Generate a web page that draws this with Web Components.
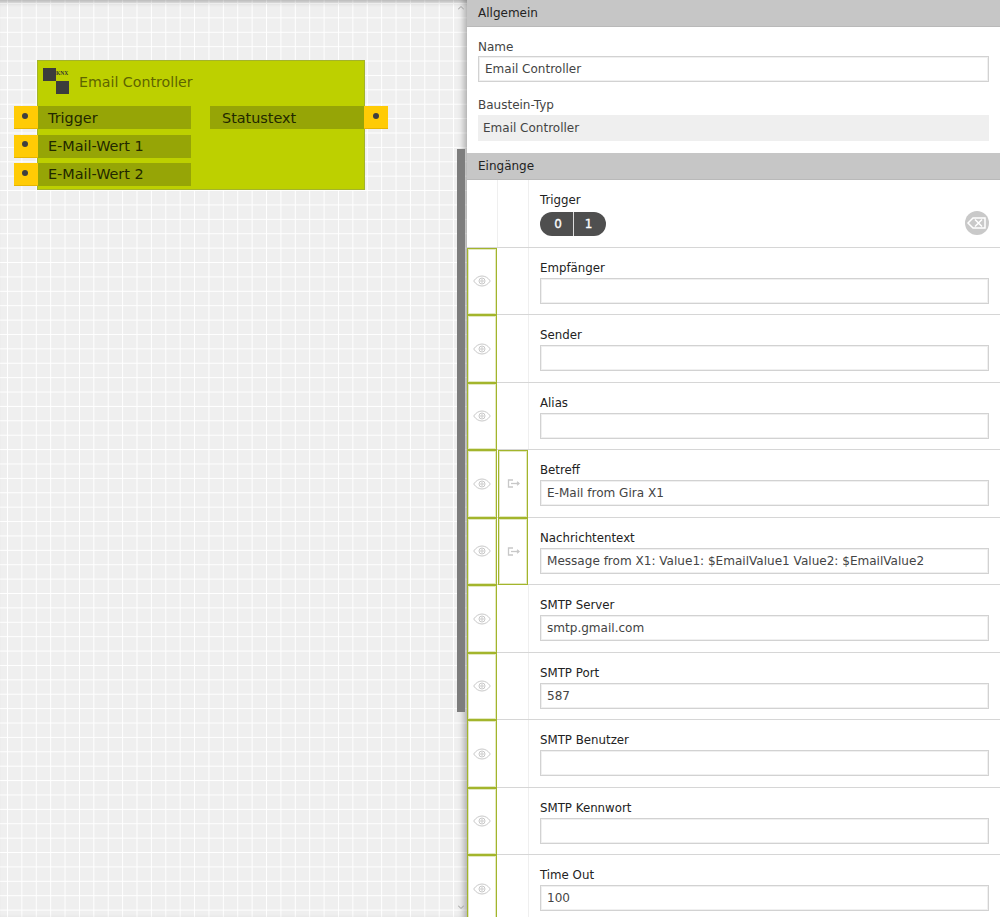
<!DOCTYPE html>
<html>
<head>
<meta charset="utf-8">
<title>Email Controller</title>
<style>
html, body { margin: 0; height: 100%; overflow: hidden; }
body { font-family: "DejaVu Sans", sans-serif; }
logic-editor { height: 917px; }
</style>
</head>
<body>

<template id="editor-tpl">
  <style>
    :host { display: grid; grid-template-columns: 467px 533px; width: 1000px; overflow: hidden; }
  </style>
  <slot name="canvas"></slot>
  <slot name="panel"></slot>
</template>

<template id="canvas-tpl">
  <style>
    :host {
      display: block; position: relative; height: 917px; overflow: hidden;
      padding: 60px 0 0 14px; box-sizing: border-box;
      background-color: #efefef;
      background-image:
        linear-gradient(to right, #fff 1.4px, transparent 1.4px),
        linear-gradient(to bottom, #fff 1.4px, transparent 1.4px);
      background-size: 14.4px 14.4px;
      background-position: 7px 3px;
      box-shadow: inset -7px 0 6px -4px rgba(0,0,0,.28), inset 0 6px 5px -4px rgba(0,0,0,.25);
    }
    .thumb { position: absolute; left: 457px; top: 149px; width: 8px; height: 563px; background: #7d7d7d; }
    .arrow { position: absolute; left: 458px; width: 6px; height: 6px; }
    .up { top: 5px; }
    .down { top: 904px; }
  </style>
  <slot></slot>
  <div class="thumb"></div>
  <svg class="arrow up" viewBox="0 0 6 6"><path d="M0 4.5 3 1.5 6 4.5" fill="none" stroke="#999"/></svg>
  <svg class="arrow down" viewBox="0 0 6 6"><path d="M0 1.5 3 4.5 6 1.5" fill="none" stroke="#999"/></svg>
</template>

<template id="block-tpl">
  <style>
    :host { display: block; width: 374px; }
    .box {
      margin: 0 23px; background: #bdd000; border: 1px solid #a3b32c; box-sizing: border-box;
      height: 130px; padding-top: 7px;
    }
    .head { display: flex; align-items: center; gap: 10px; padding-left: 4px; height: 28px; color: #5d6400; font-size: 14.2px; }
    .head svg { width: 27px; height: 27px; flex: none; align-self: flex-start; }
    .ports { display: grid; grid-template-columns: 177px 178px; column-gap: 19px; margin: 10px -24px 0; }
    .col { display: flex; flex-direction: column; gap: 5.700px; }
  </style>
  <div class="box">
    <div class="head">
      <svg viewBox="0 0 27 27">
        <rect x="1" y="0" width="13" height="13" fill="#3c3c3c"/>
        <rect x="14" y="13" width="13" height="13" fill="#3c3c3c"/>
        <text x="14" y="6.500" font-size="5.500" font-family="Liberation Serif, serif" font-weight="bold" fill="#333">KNX</text>
      </svg>
      <span><slot name="title"></slot></span>
    </div>
    <div class="ports">
      <div class="col"><slot name="in"></slot></div>
      <div class="col"><slot name="out"></slot></div>
    </div>
  </div>
</template>

<template id="port-tpl">
  <style>
    :host { display: flex; height: 23px; font-size: 14.400px; color: #222800; }
    .pin { width: 24px; flex: none; background: #ffcb05; border-bottom: 1px solid #e6b400; box-sizing: border-box; display: flex; align-items: center; justify-content: center; }
    .pin i { width: 6px; height: 6px; border-radius: 50%; background: #3f3f3f; margin: -3px 2px 0 0; }
    .lab { flex: 1; background: #96a506; padding-left: 10px; line-height: 23px; }
    :host([side="out"]) { flex-direction: row-reverse; }
    :host([side="out"]) .lab { padding-left: 12px; }
    :host([side="out"]) .pin i { margin-right: 0; }
    :host([first]) .lab { line-height: 24px; }
  </style>
  <div class="pin"><i></i></div>
  <div class="lab"><slot></slot></div>
</template>

<template id="panel-tpl">
  <style>
    :host { display: block; height: 917px; overflow: hidden; background: #fff; color: #333; font-size: 12px; }
  </style>
  <slot></slot>
</template>

<template id="section-tpl">
  <style>
    :host { display: block; }
    .title {
      height: 27px; line-height: 26px; box-sizing: border-box; padding-left: 11px;
      background: #c6c6c6; border-bottom: 1px solid #b9b9b9; color: #222; font-size: 12px;
    }
  </style>
  <div class="title"><slot name="title"></slot></div>
  <slot></slot>
</template>

<template id="general-tpl">
  <style>
    :host { display: block; padding: 13px 11px 0 11px; height: 126px; box-sizing: border-box; color: #444; font-size: 12px; }
    label { display: block; line-height: 15px; margin-bottom: 1px; }
    .val { height: 26px; line-height: 25px; border: 1px solid #d2d2d2; box-shadow: inset 0 0 0 1px #f0f0f0; box-sizing: border-box; padding-left: 6px; margin-bottom: 16px; }
    .ro { height: 26px; line-height: 26px; background: #efefef; padding-left: 5px; margin-top: 2px; }
  </style>
  <label>Name</label>
  <div class="val">Email Controller</div>
  <label>Baustein-Typ</label>
  <div class="ro">Email Controller</div>
</template>

<template id="row-tpl">
  <style>
    :host {
      display: grid; grid-template-columns: 31px 31px 1fr; height: 67.500px; box-sizing: border-box;
      border-bottom: 1px solid #d6d6d6;
    }
    .cell { border-right: 1px solid #efefef; display: flex; align-items: center; justify-content: center; box-sizing: border-box; }
    .cell.on { border: 1px solid #a3b52c; box-shadow: inset 0 0 0 1px rgba(163,181,44,.3); margin-right: 1px; margin-bottom: -1px; }
    .cell svg { display: none; }
    .cell.on svg { display: block; }
    .body { padding: 13px 11px 0 11px; position: relative; }
    label { display: block; color: #222; font-size: 11.800px; line-height: 15px; margin-bottom: 2px; }
    .val { height: 26px; line-height: 24px; border: 1px solid #d2d2d2; box-shadow: inset 0 0 0 1px #f0f0f0; box-sizing: border-box; padding-left: 6px; color: #444; white-space: nowrap; overflow: hidden; font-size: 12.060px; }
    .pill { display: inline-flex; height: 24px; margin-top: 2px; border-radius: 12px; overflow: hidden; background: #4f4f4f; color: #fff; line-height: 24px; font-size: 12px; -webkit-text-stroke: .3px #fff; }
    .pill b { width: 33px; box-sizing: border-box; text-align: center; font-weight: normal; padding-left: 3px; }
    .pill b + b { border-left: 1px solid #ddd; padding: 0 3px 0 0; }
    .clear { position: absolute; right: 11px; top: 31px; width: 24px; height: 24px; }
  </style>
  <div class="cell" id="eye">
    <svg width="18" height="12" viewBox="0 0 18 12" fill="none" stroke="#c8c8c8">
      <path d="M.7 6C3 2.600 6 1 9 1s6 1.600 8.300 5C15 9.400 12 11 9 11S3 9.400.7 6z"/>
      <circle cx="9" cy="6" r="3"/><circle cx="9" cy="6" r="1.200"/>
    </svg>
  </div>
  <div class="cell" id="link">
    <svg width="13" height="9" viewBox="0 0 13 9" fill="none" stroke="#c8c8c8" stroke-width="1.300">
      <path d="M6 1H1.500v7H6"/><path d="M4 4.500h8"/><path d="M10 2.800 12 4.500 10 6.200"/>
    </svg>
  </div>
  <div class="body">
    <label id="label"></label>
    <div id="content"></div>
  </div>
</template>

<logic-editor>
  <logic-canvas slot="canvas">
    <logic-block>
      <span slot="title">Email Controller</span>
      <logic-port slot="in" first>Trigger</logic-port>
      <logic-port slot="in">E-Mail-Wert 1</logic-port>
      <logic-port slot="in">E-Mail-Wert 2</logic-port>
      <logic-port slot="out" side="out" first>Statustext</logic-port>
    </logic-block>
  </logic-canvas>
  <prop-panel slot="panel">
    <prop-section>
      <span slot="title">Allgemein</span>
      <prop-general></prop-general>
    </prop-section>
    <prop-section>
      <span slot="title">Eingänge</span>
      <prop-row label="Trigger" toggle></prop-row>
      <prop-row label="Empfänger" eye></prop-row>
      <prop-row label="Sender" eye></prop-row>
      <prop-row label="Alias" eye></prop-row>
      <prop-row label="Betreff" eye link value="E-Mail from Gira X1"></prop-row>
      <prop-row label="Nachrichtentext" eye link value="Message from X1: Value1: $EmailValue1 Value2: $EmailValue2"></prop-row>
      <prop-row label="SMTP Server" eye value="smtp.gmail.com"></prop-row>
      <prop-row label="SMTP Port" eye value="587"></prop-row>
      <prop-row label="SMTP Benutzer" eye></prop-row>
      <prop-row label="SMTP Kennwort" eye></prop-row>
      <prop-row label="Time Out" eye value="100"></prop-row>
    </prop-section>
  </prop-panel>
</logic-editor>

<script>
function stamp(el, id) {
    var shadow = el.attachShadow({mode: 'open'});
    shadow.appendChild(document.getElementById(id).content.cloneNode(true));
    return shadow;
}

class LogicEditor extends HTMLElement { constructor() { super(); stamp(this, 'editor-tpl'); } }
class LogicCanvas extends HTMLElement { constructor() { super(); stamp(this, 'canvas-tpl'); } }
class LogicBlock extends HTMLElement { constructor() { super(); stamp(this, 'block-tpl'); } }
class LogicPort extends HTMLElement { constructor() { super(); stamp(this, 'port-tpl'); } }
class PropPanel extends HTMLElement { constructor() { super(); stamp(this, 'panel-tpl'); } }
class PropSection extends HTMLElement { constructor() { super(); stamp(this, 'section-tpl'); } }
class PropGeneral extends HTMLElement { constructor() { super(); stamp(this, 'general-tpl'); } }

class PropRow extends HTMLElement {
    constructor() {
        super();
        var shadow = stamp(this, 'row-tpl');
        shadow.getElementById('label').textContent = this.getAttribute('label');
        if (this.hasAttribute('eye')) shadow.getElementById('eye').classList.add('on');
        if (this.hasAttribute('link')) shadow.getElementById('link').classList.add('on');
        var content = shadow.getElementById('content');
        if (this.hasAttribute('toggle')) {
            content.innerHTML = '<div class="pill"><b>0</b><b>1</b></div>' +
                '<svg class="clear" viewBox="0 0 24 24"><circle cx="12" cy="12" r="12" fill="#c9c9c9"/>' +
                '<path d="M3 12 8 7h12v10H8z" fill="none" stroke="#fff" stroke-width="1.500"/>' +
                '<path d="M10 8.500l7 7M17 8.500l-7 7" stroke="#fff" stroke-width="1.500"/></svg>';
        } else {
            var val = document.createElement('div');
            val.className = 'val';
            val.textContent = this.getAttribute('value') || '';
            content.appendChild(val);
        }
    }
}

customElements.define('logic-editor', LogicEditor);
customElements.define('logic-canvas', LogicCanvas);
customElements.define('logic-block', LogicBlock);
customElements.define('logic-port', LogicPort);
customElements.define('prop-panel', PropPanel);
customElements.define('prop-section', PropSection);
customElements.define('prop-general', PropGeneral);
customElements.define('prop-row', PropRow);
</script>

</body>
</html>
